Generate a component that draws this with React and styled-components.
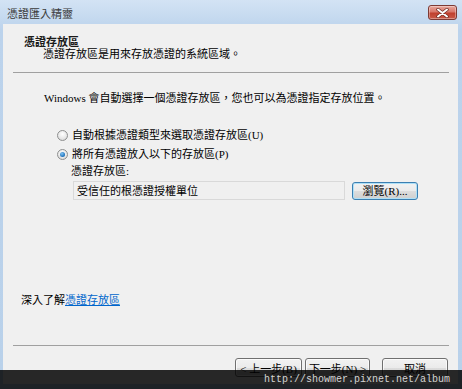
import React from 'react';
import styled, { createGlobalStyle } from 'styled-components';

const GlobalStyle = createGlobalStyle`
  html, body {
    margin: 0;
    padding: 0;
    background: #ffffff;
  }
  body {
    font-family: 'Liberation Serif', 'Noto Sans CJK TC', serif;
    font-size: 11px;
    color: #000;
  }
`;

const Window = styled.div`
  position: relative;
  width: 462px;
  height: 389px;
  display: flex;
  flex-direction: column;
  background: linear-gradient(to bottom, #d3e3f4 0%, #bcd3ec 30px, #b9d1ea 100%);
  overflow: hidden;
`;

const TitleBar = styled.div`
  height: 24px;
  display: flex;
  align-items: center;
  justify-content: space-between;
  padding: 0 5px 0 7px;
  flex-shrink: 0;
`;

const Caption = styled.span`
  font-family: 'Noto Sans CJK TC', sans-serif;
  font-size: 11px;
  color: #3a3a3a;
  margin-top: 1px;
`;

const CloseButton = styled.div`
  width: 29px;
  height: 15px;
  margin-top: 1px;
  box-sizing: border-box;
  border: 1px solid #7d3a34;
  border-radius: 3px;
  background: linear-gradient(to bottom, #e9a99e 0%, #d8776a 45%, #c0402e 55%, #c95a48 100%);
  box-shadow: inset 0 0 0 1px rgba(255, 255, 255, 0.35);
  display: flex;
  align-items: center;
  justify-content: center;
`;

const Frame = styled.div`
  flex: 1;
  display: flex;
  padding: 0 4px 5px 3px;
`;

const Content = styled.div`
  flex: 1;
  background: #f0f0f0;
  display: flex;
  flex-direction: column;
`;

const Header = styled.div`
  padding: 11px 0 0 21px;
  line-height: 13px;
`;

const HeaderTitle = styled.div`
  font-weight: bold;
  font-family: 'Noto Sans CJK TC', sans-serif;
  color: #1a1a1a;
`;

const HeaderSub = styled.div`
  padding-left: 19px;
`;

const Rule = styled.div`
  height: 1px;
  background: #a0a0a0;
  margin: ${p => p.$top}px 9px 0 10px;
`;

const Body = styled.div`
  flex: 1;
  display: flex;
  flex-direction: column;
  padding-left: 41px;
  line-height: 14px;
`;

const Intro = styled.div`
  margin-top: 18px;
`;

const Options = styled.div`
  margin-top: 23px;
  padding-left: 13px;
  display: flex;
  flex-direction: column;
  gap: 5px;
`;

const RadioRow = styled.label`
  display: flex;
  align-items: center;
  gap: 4px;
`;

const RadioDot = styled.span`
  width: 11px;
  height: 11px;
  box-sizing: border-box;
  border-radius: 50%;
  border: 1px solid #8e8f8f;
  background: radial-gradient(circle at 50% 35%, #ffffff 0%, #e6e6e6 60%, #cfcfcf 100%);
  display: flex;
  align-items: center;
  justify-content: center;

  &::after {
    content: '';
    display: ${p => (p.$checked ? 'block' : 'none')};
    width: 5px;
    height: 5px;
    border-radius: 50%;
    background: radial-gradient(circle at 40% 35%, #7fc4f5 0%, #1d6fb8 70%, #0c4d8a 100%);
  }
`;

const StoreBlock = styled.div`
  padding-left: 27px;
  margin-top: 3px;
`;

const StoreRow = styled.div`
  display: flex;
  align-items: center;
  gap: 7px;
  margin-top: 3px;
  margin-left: 2px;
`;

const StoreField = styled.div`
  width: 272px;
  height: 19px;
  box-sizing: border-box;
  border: 1px solid #d9d9d9;
  background: #f0f0f0;
  padding-left: 3px;
  display: flex;
  align-items: center;
`;

const Button = styled.div`
  width: ${p => p.$w}px;
  height: ${p => p.$h || 19}px;
  box-sizing: border-box;
  border: 1px solid ${p => (p.$focus ? '#3c7fb1' : '#707070')};
  border-radius: 3px;
  background: linear-gradient(to bottom, #f2f2f2 0%, #ebebeb 50%, #dddddd 51%, #cfcfcf 100%);
  box-shadow: inset 0 0 0 1px ${p => (p.$focus ? '#aee0f7' : 'rgba(255,255,255,0.7)')};
  display: flex;
  align-items: center;
  justify-content: center;
  white-space: nowrap;
`;

const LearnMore = styled.div`
  margin-top: auto;
  margin-left: -23px;
  line-height: 14px;
`;

const Link = styled.span`
  color: #0066cc;
  text-decoration: underline;
`;

const Footer = styled.div`
  display: flex;
  justify-content: flex-end;
  padding: 12px 10px 7px 0;
`;

const NavGroup = styled.div`
  display: flex;
  gap: 3px;
  margin-right: 12px;
`;

const Watermark = styled.div`
  position: absolute;
  left: 0;
  right: 0;
  bottom: 0;
  height: 19px;
  background: rgba(0, 0, 0, 0.84);
  display: flex;
  align-items: center;
  justify-content: flex-end;
  padding-right: 12px;
  font-family: 'Liberation Mono', monospace;
  font-size: 10px;
  color: #d4d4d4;
`;

const CloseIcon = () => (
  <svg width="13" height="10" viewBox="0 0 13 10">
    <path d="M2 1.5 L11 8.5 M11 1.5 L2 8.5" stroke="#6b2a22" strokeWidth="3.4" strokeLinecap="round" />
    <path d="M2 1.5 L11 8.5 M11 1.5 L2 8.5" stroke="#ffffff" strokeWidth="2" strokeLinecap="round" />
  </svg>
);

export default function App() {
  return (
    <>
      <GlobalStyle />
      <Window>
        <TitleBar>
          <Caption>憑證匯入精靈</Caption>
          <CloseButton>
            <CloseIcon />
          </CloseButton>
        </TitleBar>
        <Frame>
          <Content>
            <Header>
              <HeaderTitle>憑證存放區</HeaderTitle>
              <HeaderSub>憑證存放區是用來存放憑證的系統區域。</HeaderSub>
            </Header>
            <Rule $top={11} />
            <Body>
              <Intro>Windows 會自動選擇一個憑證存放區，您也可以為憑證指定存放位置。</Intro>
              <Options>
                <RadioRow>
                  <RadioDot />
                  自動根據憑證類型來選取憑證存放區(U)
                </RadioRow>
                <RadioRow>
                  <RadioDot $checked />
                  將所有憑證放入以下的存放區(P)
                </RadioRow>
              </Options>
              <StoreBlock>
                <div>憑證存放區:</div>
                <StoreRow>
                  <StoreField>受信任的根憑證授權單位</StoreField>
                  <Button $w={66} $h={18} $focus>瀏覽(R)...</Button>
                </StoreRow>
              </StoreBlock>
              <LearnMore>
                深入了解<Link>憑證存放區</Link>
              </LearnMore>
            </Body>
            <Rule $top={38} />
            <Footer>
              <NavGroup>
                <Button $w={67}>&lt; 上一步(B)</Button>
                <Button $w={65}>下一步(N) &gt;</Button>
              </NavGroup>
              <Button $w={66}>取消</Button>
            </Footer>
          </Content>
        </Frame>
        <Watermark>http://showmer.pixnet.net/album</Watermark>
      </Window>
    </>
  );
}
